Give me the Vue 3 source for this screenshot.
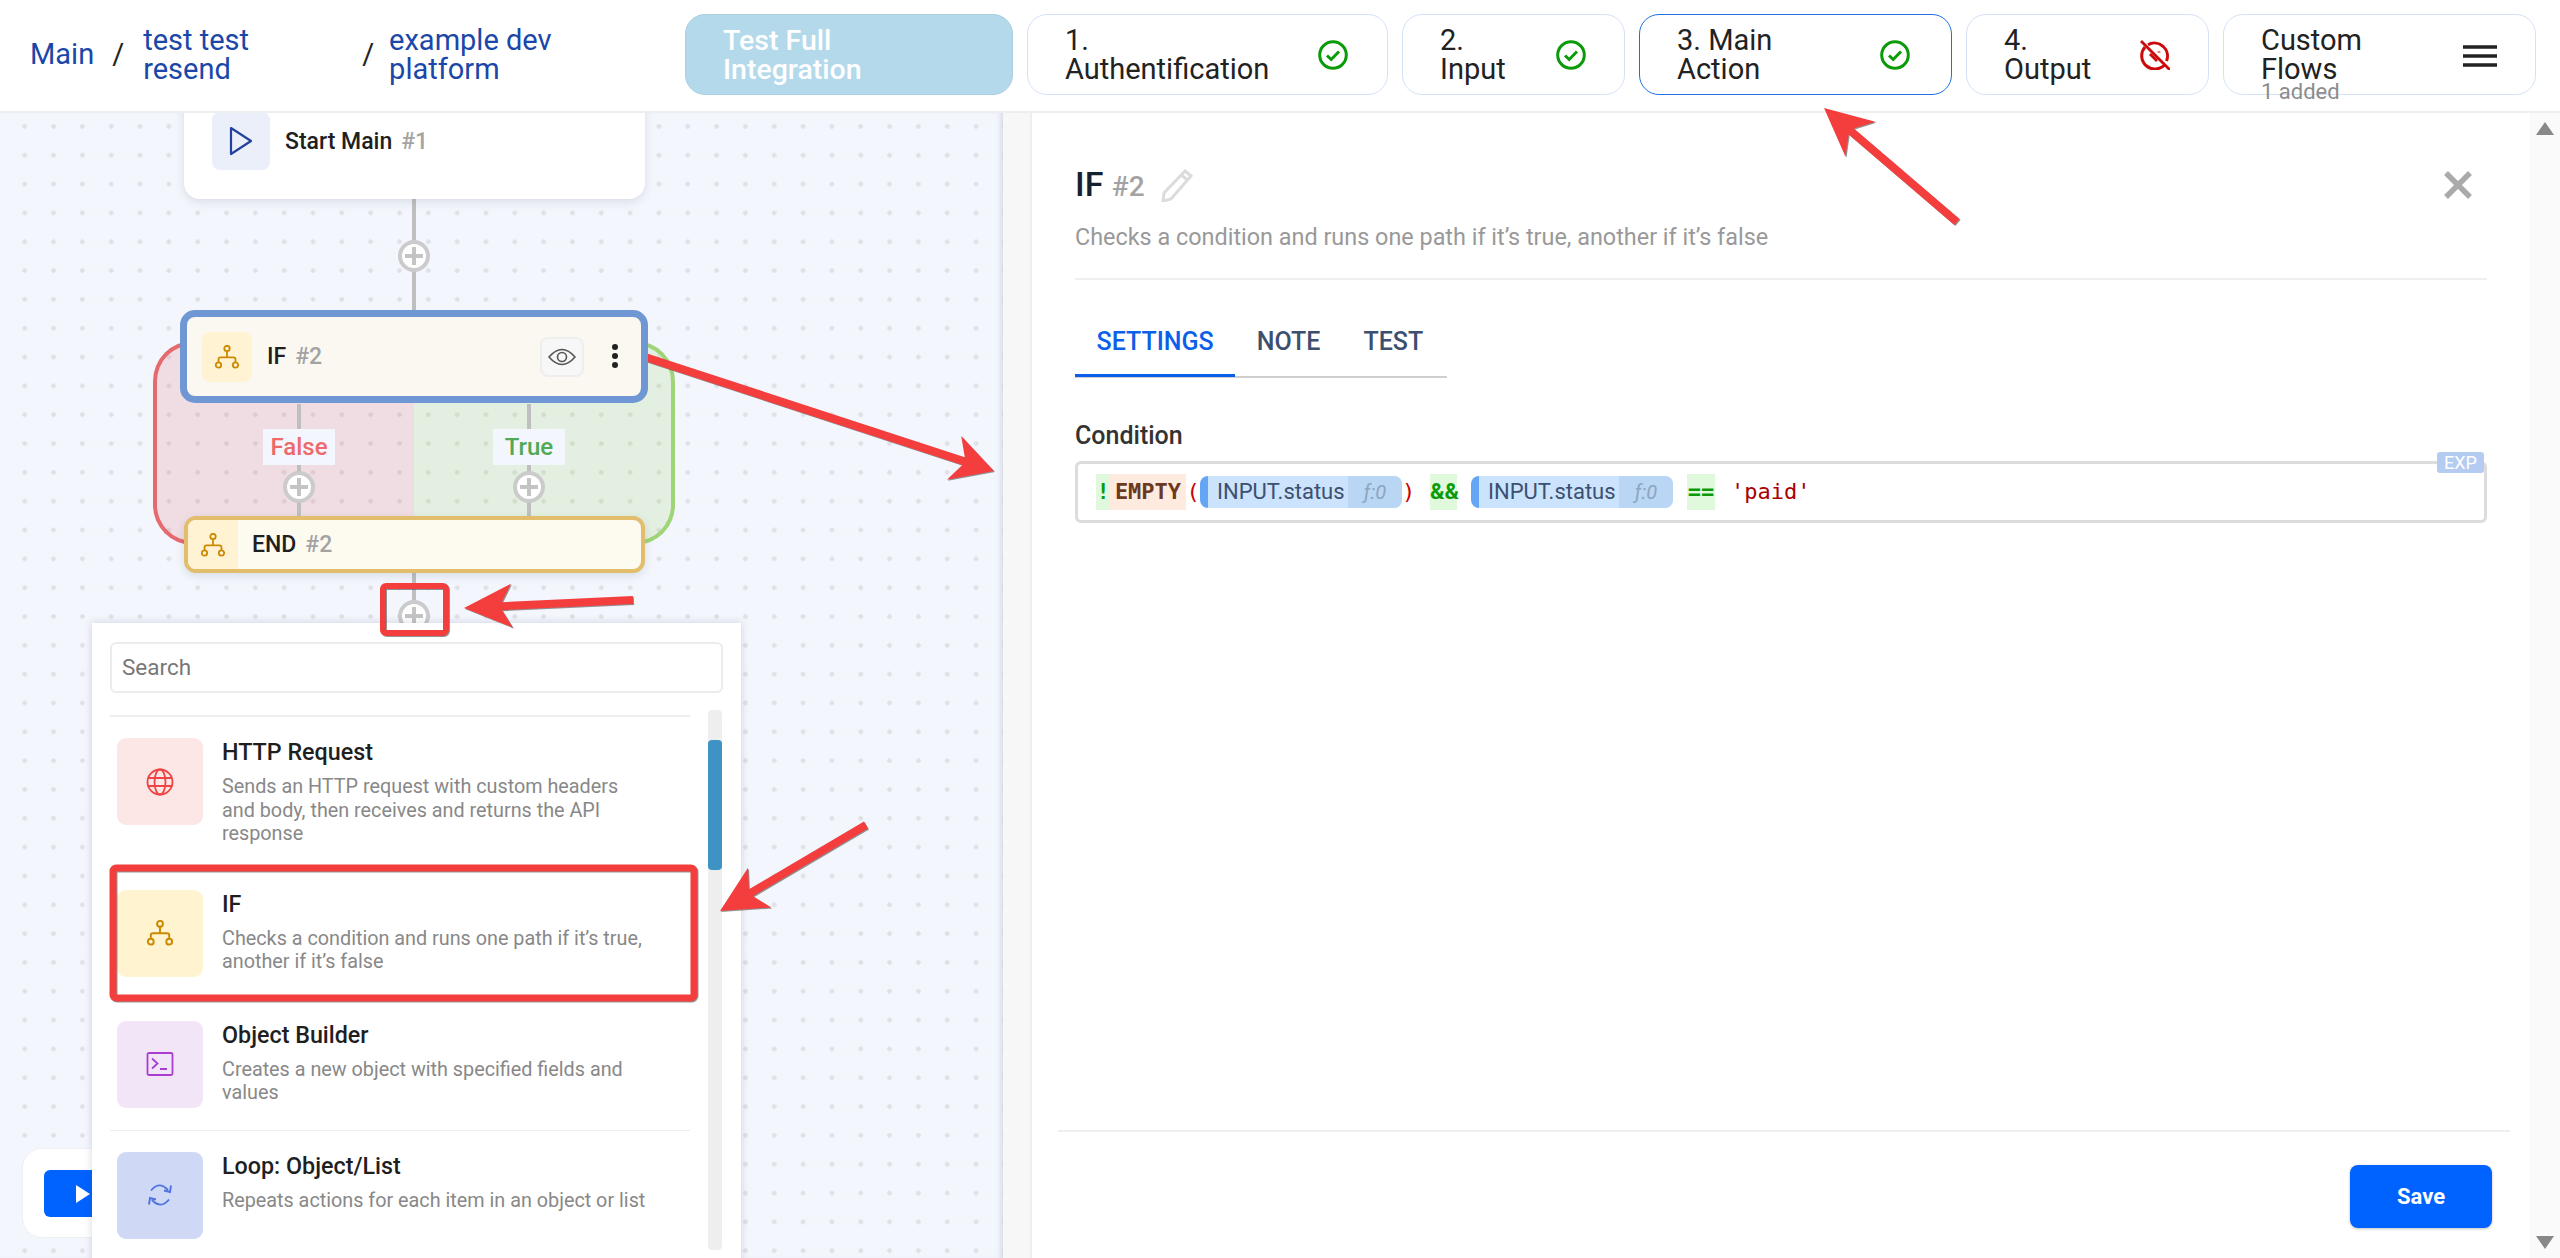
<script setup>
function arrow(tail, tip, w, len, hw, notch) {
  const dx = tip[0] - tail[0], dy = tip[1] - tail[1]
  const d = Math.hypot(dx, dy), ux = dx / d, uy = dy / d, nx = -uy, ny = ux
  const at = (t, s) => `${(tip[0] - ux * t + nx * s).toFixed(1)},${(tip[1] - uy * t + ny * s).toFixed(1)}`
  return [
    `${tail[0] + nx * w / 2},${tail[1] + ny * w / 2}`,
    at(len - notch, w / 2), at(len, hw / 2), at(0, 0), at(len, -hw / 2), at(len - notch, -w / 2),
    `${tail[0] - nx * w / 2},${tail[1] - ny * w / 2}`
  ].join(' ')
}
const arrows = [
  arrow([1957, 222], [1824, 108], 8, 48, 46, 12),
  arrow([645, 357], [994, 471], 8, 42, 46, 10),
  arrow([633, 600], [464, 608], 8, 48, 44, 10),
  arrow([866, 825], [720, 911], 8, 46, 46, 10)
]
const steps = [
  { label: '1. Authentification', cls: 's1', icon: 'ok' },
  { label: '2. Input', cls: 's2', icon: 'ok' },
  { label: '3. Main Action', cls: 's3', icon: 'ok' },
  { label: '4. Output', cls: 's4', icon: 'bad' }
]
const items = [
  { title: 'HTTP Request', desc: 'Sends an HTTP request with custom headers and body, then receives and returns the API response', kind: 'http' },
  { title: 'IF', desc: 'Checks a condition and runs one path if it’s true, another if it’s false', kind: 'if' },
  { title: 'Object Builder', desc: 'Creates a new object with specified fields and values', kind: 'obj' },
  { title: 'Loop: Object/List', desc: 'Repeats actions for each item in an object or list', kind: 'loop' }
]
</script>

<template>
  <div class="page">
    <header class="top">
      <nav class="crumbs">
        <a class="c1">Main</a><span class="sl">/</span>
        <a class="c2">test test resend</a><span class="sl">/</span>
        <a class="c3">example dev platform</a>
      </nav>
      <button class="test-btn">Test Full Integration</button>
      <div v-for="s in steps" :key="s.label" class="step" :class="s.cls">
        <span class="step-t">{{ s.label }}</span>
        <svg v-if="s.icon === 'ok'" class="st-ic" viewBox="0 0 30 30" fill="none" stroke="#0a9a0a">
          <circle cx="15" cy="15" r="13.300" stroke-width="3" />
          <path d="M9 15.5l4.2 4L21 11.5" stroke-width="3" />
        </svg>
        <svg v-else class="st-ic" viewBox="0 0 30 30" fill="none" stroke="#cc0a0a">
          <path d="M8 4.800A13 13 0 0 1 26.500 21M25 24.500A13 13 0 0 1 5 7" stroke-width="3" />
          <path d="M1 1l29 29" stroke-width="2.800" />
          <path d="M19 11.500v1M10 14l7 7" stroke-width="2.800" />
        </svg>
      </div>
      <div class="step s5">
        <span class="step-t">Custom Flows</span>
        <svg class="burger" viewBox="0 0 34 22"><path d="M0 2h34M0 11h34M0 20h34" stroke="#222" stroke-width="3.500" /></svg>
        <span class="added">1 added</span>
      </div>
    </header>

    <main class="body">
      <section class="canvas">
        <div class="line" style="left:412px;top:86px;height:112px"></div>
        <div class="branch red"></div>
        <div class="branch green"></div>
        <div class="line" style="left:297px;top:291px;height:115px"></div>
        <div class="line" style="left:527px;top:291px;height:115px"></div>
        <div class="line" style="left:412px;top:459px;height:50px"></div>

        <div class="node start">
          <span class="tile start-t">
            <svg width="24" height="30" viewBox="0 0 24 30" fill="none" stroke="#2342a0" stroke-width="2.200" stroke-linejoin="round"><path d="M2 2l20 13L2 28z" /></svg>
          </span>
          <b class="nm">Start Main</b><b class="hash">#1</b>
        </div>
        <span class="plus" style="left:398px;top:127px"></span>

        <div class="node ifn">
          <span class="tile if-t">
            <svg class="tree" viewBox="0 0 24 24" fill="none" stroke="#cc8a00" stroke-width="1.800"><circle cx="12" cy="3.500" r="2.700" /><circle cx="3.500" cy="20" r="2.700" /><circle cx="20.500" cy="20" r="2.700" /><path d="M12 6.200v6M3.500 17.300v-3q0-2 2-2h13q2 0 2 2v3" /></svg>
          </span>
          <b class="nm">IF</b><b class="hash">#2</b>
          <span class="eye">
            <svg width="28" height="18" viewBox="0 0 28 18" fill="none" stroke="#555" stroke-width="1.600"><path d="M1 9q13-15 26 0q-13 15-26 0z" /><circle cx="14" cy="9" r="4.500" /></svg>
          </span>
          <span class="kebab"><i></i><i></i><i></i></span>
        </div>

        <span class="lab false">False</span>
        <span class="lab true">True</span>
        <span class="plus" style="left:283px;top:358px"></span>
        <span class="plus" style="left:513px;top:358px"></span>

        <div class="node endn">
          <span class="end-t">
            <svg class="tree" viewBox="0 0 24 24" fill="none" stroke="#cc8a00" stroke-width="1.800"><circle cx="12" cy="3.500" r="2.700" /><circle cx="3.500" cy="20" r="2.700" /><circle cx="20.500" cy="20" r="2.700" /><path d="M12 6.200v6M3.500 17.300v-3q0-2 2-2h13q2 0 2 2v3" /></svg>
          </span>
          <b class="nm">END</b><b class="hash">#2</b>
        </div>
        <span class="plus" style="left:398px;top:487px"></span>

        <div class="runbar"><span class="run"><i class="tri"></i></span></div>

        <div class="menu">
          <div class="search">Search</div>
          <div class="list-wrap">
            <div class="list">
              <div v-for="it in items" :key="it.title" class="item">
                <span class="m-tile" :class="it.kind">
                  <svg v-if="it.kind === 'http'" width="28" height="28" viewBox="0 0 28 28" fill="none" stroke="#ee4444" stroke-width="1.800"><circle cx="14" cy="14" r="12.500" /><ellipse cx="14" cy="14" rx="5.500" ry="12.500" /><path d="M2 10h24M2 18h24" /></svg>
                  <svg v-else-if="it.kind === 'if'" class="tree mt" viewBox="0 0 24 24" fill="none" stroke="#cc8a00" stroke-width="1.800"><circle cx="12" cy="3.500" r="2.700" /><circle cx="3.500" cy="20" r="2.700" /><circle cx="20.500" cy="20" r="2.700" /><path d="M12 6.200v6M3.500 17.300v-3q0-2 2-2h13q2 0 2 2v3" /></svg>
                  <svg v-else-if="it.kind === 'obj'" width="28" height="24" viewBox="0 0 28 24" fill="none" stroke="#a83ed0" stroke-width="1.800"><rect x="1.500" y="1" width="25" height="22" rx="1.500" /><path d="M6 6.500l5.500 5-5.500 5M14 17h7" /></svg>
                  <svg v-else width="26" height="26" viewBox="0 0 26 26" fill="none" stroke="#4f74e0" stroke-width="1.900"><path d="M4 8.500Q12 -1.500 21 8M24 3.500L23 10 17 8.500" /><path d="M22 17.500Q14 27.500 5 18M2 22.500L3 16 9 17.500" /></svg>
                </span>
                <div class="m-text">
                  <div class="m-title">{{ it.title }}</div>
                  <div class="m-desc">{{ it.desc }}</div>
                </div>
              </div>
            </div>
            <div class="sb"><div class="sb-thumb"></div></div>
          </div>
        </div>
      </section>

      <div class="gutter"></div>

      <section class="panel">
        <div class="p-head">
          <h2 class="p-title">IF <span class="p-hash">#2</span></h2>
          <svg class="pencil" width="34" height="34" viewBox="0 0 34 34" fill="none" stroke="#dcdcdc" stroke-width="3"><path d="M25 3l6 5L11 31l-8 2 1-8z" /><path d="M21.500 7l6 5" /></svg>
          <svg class="close" width="28" height="28" viewBox="0 0 28 28" stroke="#aaa" stroke-width="5.500"><path d="M2 2l24 24M26 2L2 26" /></svg>
        </div>
        <p class="p-desc">Checks a condition and runs one path if it’s true, another if it’s false</p>
        <div class="tabs">
          <span class="tab on">SETTINGS</span><span class="tab">NOTE</span><span class="tab">TEST</span>
        </div>
        <label class="cond">Condition</label>
        <div class="field">
          <span class="exp">EXP</span>
          <span class="tk op">!</span><span class="tk fn">EMPTY</span><span class="tk br">(</span>
          <span class="pill"><span class="p-name">INPUT.status</span><i class="p-f">ƒ:0</i></span>
          <span class="tk br close-br">)</span><span class="tk amp">&amp;&amp;</span>
          <span class="pill"><span class="p-name">INPUT.status</span><i class="p-f">ƒ:0</i></span>
          <span class="tk eq">==</span><span class="tk str">'paid'</span>
        </div>
        <div class="p-foot"><button class="save">Save</button></div>
      </section>

      <aside class="scroll">
        <span class="ar up"></span>
        <span class="ar down"></span>
      </aside>
    </main>

    <svg class="overlay" width="2560" height="1258" viewBox="0 0 2560 1258">
      <g class="shadowed">
        <polygon v-for="(a, i) in arrows" :key="i" :points="a" fill="#f43e3e" />
        <rect x="383" y="586" width="63" height="47" rx="3" fill="none" stroke="#f43e3e" stroke-width="6" />
        <rect x="113" y="868" width="581" height="130" rx="3" fill="none" stroke="#f43e3e" stroke-width="7" />
      </g>
    </svg>
  </div>
</template>

<style scoped>
.page {
  position: relative;
  width: 2560px;
  height: 1258px;
  overflow: hidden;
  display: flex;
  flex-direction: column;
  background: #fff;
  font-family: Roboto, "Liberation Sans", sans-serif;
  color: #222;
}
.top {
  height: 113px;
  flex: none;
  box-sizing: border-box;
  border-bottom: 2px solid #eceef0;
  display: flex;
  align-items: flex-start;
  padding-top: 14px;
  font-size: 29px;
  line-height: 29px;
}
.crumbs {
  width: 685px;
  height: 81px;
  flex: none;
  display: flex;
  align-items: center;
  color: #1a47a8;
}
.crumbs a { display: block; }
.c1 { margin-left: 30px; }
.c2 { width: 219px; box-sizing: border-box; padding-right: 70px; }
.c3 { width: 170px; }
.sl { color: #222; margin: 0 19px 0 18px; }
.c2 + .sl { margin: 0 15px 0 0; }
.test-btn {
  flex: none;
  width: 328px;
  height: 81px;
  box-sizing: border-box;
  border: 1px solid #a9cfe1;
  border-radius: 20px;
  background: #b3d9ea;
  color: #fff;
  font: 500 28.500px/29px Roboto, sans-serif;
  text-align: left;
  padding: 0 130px 0 37px;
}
.step {
  position: relative;
  flex: none;
  height: 81px;
  box-sizing: border-box;
  border: 1.500px solid #d4e2f8;
  border-radius: 20px;
  margin-left: 14px;
  padding-left: 37px;
  display: flex;
  align-items: center;
}
.step-t { display: block; }
.st-ic { position: absolute; top: 25px; width: 30px; height: 30px; }
.s1 { width: 361px; }
.s1 .step-t { width: 212px; }
.s1 .st-ic { left: 290px; }
.s2 { width: 223px; }
.s2 .step-t { width: 80px; }
.s2 .st-ic { left: 153px; }
.s3 { width: 313px; border-color: #1f6fe0; }
.s3 .step-t { width: 130px; }
.s3 .st-ic { left: 240px; }
.s4 { width: 243px; }
.s4 .step-t { width: 100px; }
.s4 .st-ic { left: 173px; }
.s5 { width: 313px; }
.s5 .step-t { width: 120px; }
.burger { position: absolute; left: 239px; top: 30px; width: 34px; height: 22px; }
.added {
  position: absolute;
  left: 37px;
  top: 65px;
  font-size: 22px;
  line-height: 24px;
  color: #8c8c8c;
}

.body { flex: 1; min-height: 0; display: flex; }
.canvas {
  position: relative;
  width: 1003px;
  flex: none;
  overflow: hidden;
  background-color: #f3f6fc;
  background-image: radial-gradient(circle, #dfe1e6 2px, transparent 2.600px);
  background-size: 28.830px 28.830px;
  background-position: 10.300px -1px;
  box-shadow: inset -6px 0 6px -5px rgba(60, 70, 100, .22);
}
.gutter { width: 27px; flex: none; background: #f7f7f7; border-right: 2px solid #eeeeee; }
.line { position: absolute; width: 4px; background: #bfbfbf; }
.plus {
  position: absolute;
  width: 32px;
  height: 32px;
  box-sizing: border-box;
  border: 4px solid #cbcbcb;
  border-radius: 50%;
  background-color: #fff;
  background-image: linear-gradient(#c4c4c4, #c4c4c4), linear-gradient(#c4c4c4, #c4c4c4);
  background-size: 18px 4px, 4px 18px;
  background-position: center;
  background-repeat: no-repeat;
}
.node { position: absolute; box-sizing: border-box; display: flex; align-items: center; background: #fff; font-size: 23px; }
.nm { font-weight: 500; color: #1f1f1f; }
.hash { font-weight: 500; color: #a3a3a3; margin-left: 9px; }
.tile { display: flex; align-items: center; justify-content: center; flex: none; border-radius: 8px; }
.tree { width: 24px; height: 24px; }
.start {
  left: 184px; top: -30px; width: 461px; height: 116px;
  border-radius: 16px;
  padding-left: 28px;
  box-shadow: 0 3px 10px rgba(60, 70, 100, .14);
}
.start-t { width: 58px; height: 58px; background: #eaeff9; margin-right: 15px; }
.ifn {
  left: 180px; top: 197px; width: 468px; height: 93px;
  border: 7px solid #6f97d4;
  border-radius: 15px;
  background: #fbf8f1;
  padding-left: 15px;
  z-index: 2;
}
.if-t { width: 50px; height: 50px; background: #fff3d4; margin-right: 15px; }
.eye {
  position: absolute;
  left: 353px; top: 20px;
  width: 44px; height: 40px;
  box-sizing: border-box;
  border: 2px solid #eeeeee;
  border-radius: 8px;
  background: #f7f7f7;
  display: flex; align-items: center; justify-content: center;
}
.kebab { position: absolute; left: 425px; top: 27px; display: flex; flex-direction: column; gap: 3px; }
.kebab i { display: block; width: 6px; height: 6px; border-radius: 50%; background: #222; }
.branch { position: absolute; top: 228px; height: 204px; box-sizing: border-box; }
.red {
  left: 153px; width: 261px;
  background: rgba(220, 80, 90, .15);
  border: solid #e56a6f;
  border-width: 4px 0 4px 4px;
  border-radius: 40px 0 0 40px;
}
.green {
  left: 414px; width: 261px;
  background: rgba(140, 200, 70, .15);
  border: solid #a0d478;
  border-width: 4px 4px 4px 0;
  border-radius: 0 40px 40px 0;
}
.lab {
  position: absolute;
  top: 316px;
  width: 72px;
  height: 36px;
  background: #f3f6fc;
  text-align: center;
  font: 500 24px/36px Roboto, sans-serif;
}
.false { left: 263px; color: #ee6a6a; }
.true { left: 493px; color: #4fa955; }
.endn {
  left: 184px; top: 403px; width: 461px; height: 57px;
  border: 4px solid #e2bd6c;
  border-radius: 12px;
  background: #fdfaf0;
  box-shadow: 0 3px 8px rgba(60, 70, 100, .14);
  overflow: hidden;
}
.end-t { width: 50px; align-self: stretch; background: #fff3d4; display: flex; align-items: center; justify-content: center; margin-right: 14px; }
.runbar {
  position: absolute;
  left: 22px; top: 1035px;
  width: 200px; height: 90px;
  box-sizing: border-box;
  background: #fff;
  border: 1px solid #eef0f3;
  border-radius: 20px;
  padding: 21px;
}
.run { display: flex; align-items: center; width: 150px; height: 47px; background: #0062ff; border-radius: 6px; padding-left: 32px; box-sizing: border-box; }
.tri { width: 0; height: 0; border-left: 14px solid #fff; border-top: 9px solid transparent; border-bottom: 9px solid transparent; }
.menu {
  position: absolute;
  left: 92px; top: 510px;
  width: 649px; height: 640px;
  box-sizing: border-box;
  background: #fff;
  padding: 19px 18px 0;
  box-shadow: 0 0 8px rgba(60, 70, 100, .2);
}
.search {
  height: 51px;
  box-sizing: border-box;
  border: 2px solid #ececec;
  border-radius: 6px;
  padding-left: 10px;
  font-size: 22.500px;
  line-height: 47px;
  color: #777;
}
.list-wrap { position: relative; margin-top: 22px; padding-right: 32px; width: 612px; box-sizing: border-box; }
.list { width: 580px; border-top: 2px solid #eeeeee; }
.item { display: flex; padding: 21px 0 22px 7px; border-bottom: 1px solid #eeeeee; }
.item:last-child { border-bottom: 0; }
.m-tile { width: 86px; height: 87px; flex: none; border-radius: 9px; display: flex; align-items: center; justify-content: center; margin-right: 19px; }
.m-tile .mt { width: 26px; height: 26px; }
.http { background: #fde6e6; }
.if { background: #fff3d0; }
.obj { background: #f3e5f8; }
.loop { background: #cfd8f5; }
.m-title { font: 500 23.300px/28px Roboto, sans-serif; color: #1f1f1f; margin-bottom: 9px; }
.m-desc { font-size: 19.800px; line-height: 23.500px; color: #888; width: 425px; }
.sb { position: absolute; left: 598px; top: -5px; width: 14px; height: 540px; background: #eeeeee; border-radius: 4px; }
.sb-thumb { position: absolute; left: 0; top: 30px; width: 14px; height: 130px; background: #3d93c4; border-radius: 4px; }

.panel { position: relative; flex: 1; min-width: 0; box-sizing: border-box; padding: 0 43px; }
.p-head { height: 72px; padding-top: 38px; display: flex; align-items: center; position: relative; box-sizing: content-box; }
.p-title { margin: -3px 0 0; font-size: 34px; line-height: 40px; font-weight: 500; color: #17202f; }
.p-hash { font-size: 28px; color: #a3a3a3; }
.pencil { margin-left: 15px; margin-top: -4px; }
.close { position: absolute; right: 15px; top: 58px; }
.p-desc { margin: 0; font-size: 23.400px; line-height: 28px; color: #999; padding-bottom: 27px; border-bottom: 2px solid #efefef; }
.tabs { display: inline-flex; margin-top: 34px; border-bottom: 2px solid #cfcfcf; }
.panel .tabs { width: 372px; }
.tab { font: 500 25px/30px Roboto, sans-serif; color: #3d4f6f; padding: 13px 21.500px 19px; }
.tab.on { color: #0b5fe8; box-shadow: inset 0 -3px 0 0 #0b5fe8; margin-bottom: -1px; }
.cond { display: block; margin-top: 43px; font-size: 25px; line-height: 30px; font-weight: 500; color: #333; }
.field {
  position: relative;
  margin-top: 10px;
  height: 62px;
  box-sizing: border-box;
  border: 3px solid #dcdcdc;
  border-radius: 6px;
  padding-left: 18px;
  display: flex;
  align-items: center;
  font: 22px/36px "DejaVu Sans Mono", monospace;
}
.exp {
  position: absolute;
  right: 0; top: -12px;
  width: 47px; height: 21px;
  background: #b5ccf2;
  border-radius: 3px;
  color: #fff;
  font: 18px/21px Roboto, sans-serif;
  text-align: center;
}
.tk { height: 36px; display: block; flex: none; }
.op { width: 14px; background: #e0f8dc; color: #0a9a0a; text-align: center; font-weight: 700; }
.fn { width: 76px; background: #ffeae0; color: #6b3a1e; font-weight: 700; text-align: center; }
.br { width: 14px; color: #c00; text-align: center; }
.close-br { width: 12px; }
.amp { width: 27px; margin-left: 16px; margin-right: 14px; background: #e0f8dc; color: #0a9a0a; font: 700 22px/36px Roboto, sans-serif; text-align: center; }
.eq { width: 28px; margin-left: 14px; background: #e0f8dc; color: #0a9a0a; font-weight: 700; text-align: center; }
.str { margin-left: 16px; color: #a80000; }
.pill {
  width: 202px;
  height: 32px;
  flex: none;
  box-sizing: border-box;
  border-left: 8px solid #64a6f5;
  border-radius: 8px;
  background: #cbe3fd;
  display: flex;
  font: 22px/32px Roboto, sans-serif;
  color: #3c5070;
  overflow: hidden;
}
.p-name { flex: 1; padding-left: 9px; }
.p-f { width: 54px; background: #b9d6f4; color: #8ea5c0; text-align: center; font-size: 20px; }
.p-foot {
  position: absolute;
  left: 26px; right: 20px; top: 1017px;
  height: 97px;
  border-top: 2px solid #eeeeee;
  display: flex;
  justify-content: flex-end;
  padding: 33px 18px 0 0;
  box-sizing: border-box;
}
.save {
  width: 142px; height: 63px;
  border: 0;
  border-radius: 8px;
  background: #0062ff;
  color: #fff;
  font: 700 22px Roboto, sans-serif;
  box-shadow: 0 1px 3px rgba(0, 0, 0, .25);
}
.scroll { position: relative; width: 30px; flex: none; background: #fafafa; }
.ar { position: absolute; left: 6px; width: 0; height: 0; border-left: 9px solid transparent; border-right: 9px solid transparent; }
.up { top: 9px; border-bottom: 13px solid #888; }
.down { bottom: 9px; border-top: 13px solid #888; }
.overlay { position: absolute; left: 0; top: 0; pointer-events: none; }
.shadowed { filter: drop-shadow(1px 1px 0.600px rgba(60, 60, 60, .55)); }
</style>
